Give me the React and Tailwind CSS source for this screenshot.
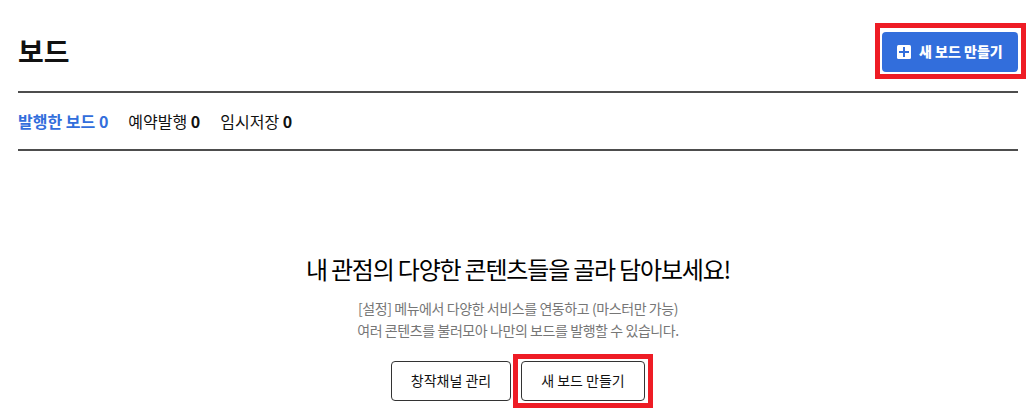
import React from 'react';

const tabs = [
  { label: '발행한 보드', count: 0, active: true },
  { label: '예약발행', count: 0 },
  { label: '임시저장', count: 0 },
];

const PlusIcon = () => (
  <svg className="w-3.5 h-3.5 shrink-0" viewBox="0 0 14 14">
    <rect width="14" height="14" rx="1.5" fill="#fff" />
    <path d="M7 2v10M2 7h10" stroke="#326edc" strokeWidth="2" />
  </svg>
);

const OutlineButton = ({ children }) => (
  <button className="h-10 px-[19px] pb-0.5 border border-[#333] rounded-[4px] bg-white text-sm text-[#111] whitespace-nowrap">
    {children}
  </button>
);

const App = () => {
  return (
    <div className="h-[414px] overflow-hidden bg-white pl-[18px] pr-[3px] pt-[23px] font-['Noto_Sans_CJK_KR','Noto_Sans_KR',sans-serif] text-[#111]">
      {/* Header */}
      <header className="flex items-start justify-between h-[68px]">
        <h1 className="mt-[7px] text-[28px] leading-[42px] font-bold">보드</h1>
        <div className="border-[5px] border-[#ee1c25] h-14 w-[151px] pl-0.5 pt-1">
          <button className="flex items-center w-[136px] h-10 pl-[15px] gap-2 rounded-[4px] bg-[#326edc] text-sm font-black text-white whitespace-nowrap">
            <PlusIcon />
            <span className="pb-0.5">새 보드 만들기</span>
          </button>
        </div>
      </header>

      {/* Tabs */}
      <nav className="flex items-center gap-5 w-[1000px] h-[60px] border-y-2 border-[#4d4d4d] text-base">
        {tabs.map((tab) => (
          <a key={tab.label} className={tab.active ? 'font-bold text-[#326edc]' : ''}>
            {tab.label} <strong className="font-bold">{tab.count}</strong>
          </a>
        ))}
      </nav>

      {/* Empty state */}
      <section className="flex flex-col items-center w-[1000px] pt-[100px] text-center">
        <h2 className="text-2xl leading-9 tracking-[-1.2px] text-black whitespace-nowrap">
          내 관점의 다양한 콘텐츠들을 골라 담아보세요!
        </h2>
        <p className="mt-2.5 text-sm leading-[22px] tracking-[-0.42px] text-[#767676]">
          [설정] 메뉴에서 다양한 서비스를 연동하고 (마스터만 가능)
          <br />
          여러 콘텐츠를 불러모아 나만의 보드를 발행할 수 있습니다.
        </p>
        <div className="flex items-start gap-0.5 mt-[13px] ml-[8px]">
          <div className="pt-[7px]">
            <OutlineButton>창작채널 관리</OutlineButton>
          </div>
          <div className="w-[140px] h-[54px] pl-[3px] pt-0.5 border-[5px] border-[#ee1c25] text-left">
            <OutlineButton>새 보드 만들기</OutlineButton>
          </div>
        </div>
      </section>
    </div>
  );
};

export default App;
